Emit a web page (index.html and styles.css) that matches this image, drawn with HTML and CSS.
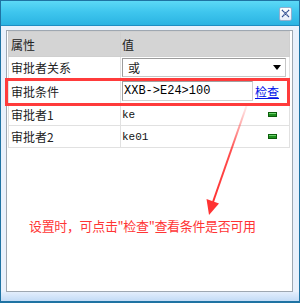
FILE: index.html
```html
<!DOCTYPE html>
<html>
<head>
<meta charset="utf-8">
<link rel="stylesheet" href="styles.css">
</head>
<body>
<div class="window">
  <div class="titlebar">
    <div class="close">
      <svg width="9" height="9" viewBox="0 0 9 9"><path d="M1 1 L8 8 M8 1 L1 8" stroke="#2b4a8e" stroke-width="1.5" stroke-dasharray="1.2 0.5" fill="none"/></svg>
    </div>
  </div>
  <div class="content">
    <div class="panel">
      <table class="grid">
        <tr class="head"><td class="c1">属性</td><td class="c2">值</td></tr>
        <tr class="r1"><td class="c1">审批者关系</td><td class="c2"><div class="select"><span>或</span><svg width="8" height="5" viewBox="0 0 8 5"><path d="M0 0 H8 L4 5 Z" fill="#000"/></svg></div></td></tr>
        <tr class="r2"><td class="c1">审批条件</td><td class="c2"><div class="cond"><span class="input">XXB-&gt;E24&gt;100</span><a class="check" href="#">检查</a></div></td></tr>
        <tr class="r3"><td class="c1">审批者1</td><td class="c2"><div class="val"><span class="mono">ke</span><span class="minus"></span></div></td></tr>
        <tr class="r3"><td class="c1">审批者2</td><td class="c2"><div class="val"><span class="mono">ke01</span><span class="minus"></span></div></td></tr>
      </table>
      <p class="note">设置时，可点击"检查"查看条件是否可用</p>
    </div>
  </div>
  <div class="footer"></div>
  <div class="highlight"></div>
  <svg class="arrow" width="300" height="303" viewBox="0 0 300 303">
    <defs>
      <linearGradient id="g" x1="246" y1="106" x2="212" y2="205" gradientUnits="userSpaceOnUse">
        <stop offset="0" stop-color="#ff4040" stop-opacity="0.1"/>
        <stop offset="0.45" stop-color="#ff3a3a" stop-opacity="0.9"/>
        <stop offset="1" stop-color="#ff3030"/>
      </linearGradient>
    </defs>
    <path d="M246.5 106 L213 202" stroke="url(#g)" stroke-width="2" fill="none"/>
    <polygon points="209,215 206.5,199 219,203.5" fill="#ff3333"/>
  </svg>
</div>
</body>
</html>
```
FILE: styles.css
```css
html, body {
  margin: 0;
  padding: 0;
  background: #ffffff;
}
.window {
  position: relative;
  width: 300px;
  height: 303px;
  box-sizing: border-box;
  border: 1px solid #1f73a3;
  border-bottom-width: 2px;
  background: #e9f1fc;
  display: flex;
  flex-direction: column;
  font-family: "Noto Sans CJK SC", sans-serif;
}
.titlebar {
  height: 25px;
  box-sizing: border-box;
  flex: none;
  background: linear-gradient(to bottom, #5cd9f6 0%, #3fc6ee 45%, #2bb3e2 100%);
  border-bottom: 1px solid #1e8dc2;
  display: flex;
  justify-content: flex-end;
  align-items: center;
  padding-right: 7px;
}
.close {
  width: 13px;
  height: 14px;
  box-sizing: border-box;
  border: 1px solid #8fb0d0;
  border-radius: 2px;
  background: linear-gradient(#ffffff, #e6eefa);
  display: flex;
  align-items: center;
  justify-content: center;
  margin-top: 1px;
}
.content {
  flex: none;
  padding: 4px 6px 0 5px;
}
.panel {
  height: 262px;
  box-sizing: border-box;
  border: 1px solid #9ea7b1;
  background: #ffffff;
  padding: 0 1px;
}
.grid {
  border-collapse: collapse;
  width: 282px;
  font-size: 12px;
  color: #222;
  margin-top: 0;
}
.grid td {
  border: 1px solid #e1e1e1;
  padding: 0;
  vertical-align: middle;
}
.grid .c1 {
  width: 112px;
  padding-left: 2px;
  box-sizing: border-box;
}
.grid .c2 {
  padding-left: 1px;
}
.head td {
  background: #d4d4d4;
  height: 24px;
  border-color: #cfcfcf;
}
.r1 td { height: 21px; }
.r2 td { height: 24px; }
.r3 td { height: 21px; }
.select {
  height: 19px;
  width: 164px;
  box-sizing: border-box;
  border: 1px solid #c6c6c6;
  border-left-color: #9c9c9c;
  border-top-color: #9c9c9c;
  display: flex;
  align-items: center;
  justify-content: space-between;
  padding: 0 4px 0 5px;
  font-size: 12px;
}
.cond {
  display: flex;
  align-items: center;
}
.input {
  width: 131px;
  height: 20px;
  box-sizing: border-box;
  border: 1px solid #d0d0d0;
  border-left-color: #a0a0a0;
  border-top-color: #a0a0a0;
  font-family: "Liberation Mono", monospace;
  font-size: 12px;
  line-height: 18px;
  padding-left: 1px;
  color: #000;
  white-space: nowrap;
}
.check {
  color: #0010e8;
  font-size: 12px;
  margin-left: 2px;
  text-decoration: underline;
}
.val {
  display: flex;
  align-items: center;
  justify-content: space-between;
  padding-right: 12px;
}
.mono {
  font-family: "Liberation Mono", monospace;
  font-size: 11px;
  color: #111;
}
.minus {
  width: 7px;
  height: 3px;
  background: #1f8f1f;
  border: 0.5px solid #0b5d0b;
  box-shadow: inset 0 1px 0 #6cd26c;
}
.note {
  margin: 70px 0 0 21px;
  color: #ff3535;
  font-size: 13px;
  line-height: 16px;
  letter-spacing: -0.35px;
}
.footer {
  flex: 1;
  background: linear-gradient(to bottom, #e3eefc, #c3dbf6);
}
.highlight {
  position: absolute;
  left: 4px;
  top: 77px;
  width: 285px;
  height: 28px;
  box-sizing: border-box;
  border: 3px solid #ff3b3b;
}
.arrow {
  position: absolute;
  left: -1px;
  top: -1px;
  pointer-events: none;
}
```
